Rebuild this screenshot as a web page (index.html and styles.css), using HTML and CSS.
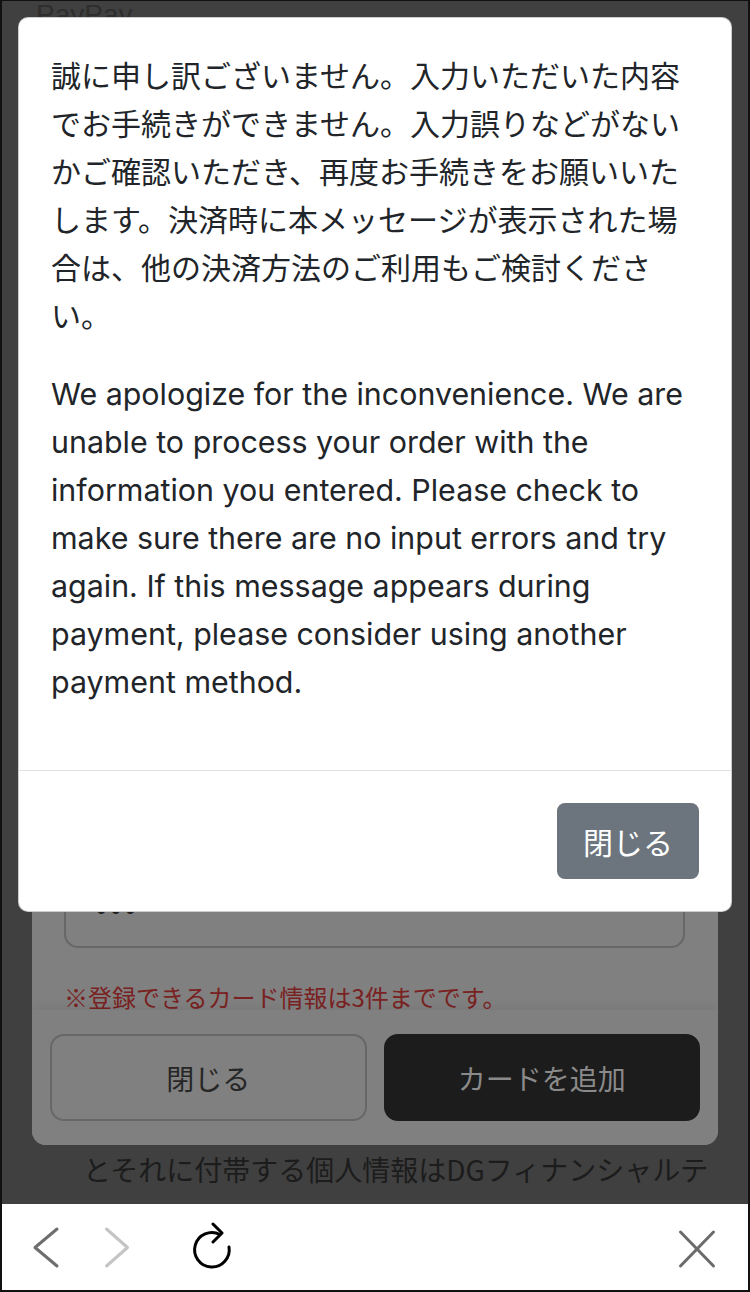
FILE: index.html
```html
<!DOCTYPE html>
<html lang="ja">
<head>
    <meta charset="UTF-8">
    <meta name="viewport" content="width=device-width, initial-scale=1.0">
    <title>PayPay</title>
    <link rel="stylesheet" href="styles.css">
</head>
<body>

    <div class="screen">
        <!-- Page behind the error dialog -->
        <div class="page">
            <div class="brand">PayPay</div>

            <div class="sheet">
                <div class="sheet-body">
                    <p class="field-label">カード番号</p>
                    <div class="field">•••• •••• •••• ••••</div>
                    <p class="field-label">有効期限</p>
                    <div class="field">MM / YY</div>
                    <p class="field-label">セキュリティコード</p>
                    <div class="field">•••</div>
                    <p class="note">※登録できるカード情報は3件までです。</p>
                </div>
                <div class="sheet-foot">
                    <button class="btn-outline">閉じる</button>
                    <button class="btn-dark">カードを追加</button>
                </div>
            </div>

            <p class="notice">とそれに付帯する個人情報はDGフィナンシャルテクノロジー社と契約関係にある加盟店に提供されます。</p>
        </div>

        <!-- Browser toolbar -->
        <div class="toolbar">
            <svg class="tool" width="44" height="44" viewBox="0 0 44 44">
                <polyline points="33,4 11,22.5 33,41" fill="none" stroke="#6e6e6e" stroke-width="3" stroke-linecap="round" stroke-linejoin="round"/>
            </svg>
            <svg class="tool tool-fwd" width="44" height="44" viewBox="0 0 44 44">
                <polyline points="11.5,4 32.5,22.5 11.5,41" fill="none" stroke="#c4c4c4" stroke-width="3" stroke-linecap="round" stroke-linejoin="round"/>
            </svg>
            <svg class="tool tool-reload" width="44" height="50" viewBox="0 0 44 50">
                <path d="M29 12.5 A17.3 17.3 0 1 0 38 25" fill="none" stroke="#000" stroke-width="3" stroke-linecap="round"/>
                <polyline points="22,2 31,11 22,20" fill="none" stroke="#000" stroke-width="3" stroke-linecap="round" stroke-linejoin="round"/>
            </svg>
            <svg class="tool tool-close" width="44" height="44" viewBox="0 0 44 44">
                <line x1="5.5" y1="7" x2="38.5" y2="41" stroke="#6b6b6b" stroke-width="3" stroke-linecap="round"/>
                <line x1="38.5" y1="7" x2="5.5" y2="41" stroke="#6b6b6b" stroke-width="3" stroke-linecap="round"/>
            </svg>
        </div>

        <!-- Error dialog -->
        <div class="modal">
            <div class="modal-body">
                <p class="msg-ja">誠に申し訳ございません。入力いただいた内容でお手続きができません。入力誤りなどがないかご確認いただき、再度お手続きをお願いいたします。決済時に本メッセージが表示された場合は、他の決済方法のご利用もご検討ください。</p>
                <p class="msg-en">We apologize for the inconvenience. We are unable to process your order with the information you entered. Please check to make sure there are no input errors and try again. If this message appears during payment, please consider using another payment method.</p>
            </div>
            <div class="modal-foot">
                <button class="btn-close">閉じる</button>
            </div>
        </div>
    </div>

</body>
</html>
```

FILE: styles.css
```css
body {
    margin: 0;
    padding: 0;
    background-color: #404040;
}
.screen {
    position: relative;
    width: 750px;
    height: 1292px;
    box-sizing: border-box;
    border: 2px solid #111;
    border-top-width: 1px;
    display: flex;
    flex-direction: column;
    overflow: hidden;
    background-color: #404040;
    font-family: "Noto Sans CJK JP", sans-serif;
}
button {
    font-family: "Noto Sans CJK JP", sans-serif;
    cursor: pointer;
}
p {
    margin: 0;
}

/* Page behind the overlay */
.page {
    flex: 1;
    overflow: hidden;
}
.brand {
    height: 30px;
    padding-left: 34px;
    font-family: "Liberation Sans", Arial, sans-serif;
    font-size: 28px;
    line-height: 28px;
    color: #2e2e2e;
}
.sheet {
    margin-left: 30px;
    width: 686px;
    height: 1114px;
    background-color: #808080;
    border-radius: 0 0 14px 14px;
    display: flex;
    flex-direction: column;
    justify-content: flex-end;
    overflow: hidden;
}
.sheet-body {
    padding: 0 33px 0 32px;
}
.field-label {
    margin-top: 40px;
    margin-bottom: 16px;
    font-size: 26px;
    line-height: 36px;
    color: #262626;
}
.field {
    border: 2px solid #676767;
    border-radius: 14px;
    padding: 32px 30px 12px;
    font-family: "Liberation Sans", Arial, sans-serif;
    font-size: 30px;
    line-height: 48px;
    letter-spacing: 4px;
    color: #1f1f1f;
}
.note {
    margin-top: 36px;
    font-size: 24px;
    line-height: 26px;
    color: #7a2121;
}
.sheet-foot {
    display: flex;
    gap: 17px;
    padding: 24px 18px;
    background-color: #808080;
    box-shadow: 0 -4px 8px rgba(0, 0, 0, 0.05);
}
.btn-outline, .btn-dark {
    flex: 1;
    height: 87px;
    box-sizing: border-box;
    border-radius: 14px;
    font-size: 28px;
}
.btn-outline {
    background-color: transparent;
    border: 2px solid #676767;
    color: #262626;
}
.btn-dark {
    background-color: #1c1c1c;
    border: 2px solid #1c1c1c;
    color: #8a8a8a;
}
.notice {
    margin: 0 30px 0 81px;
    font-size: 28px;
    line-height: 48px;
    color: #1c1c1c;
}

/* Browser toolbar */
.toolbar {
    height: 86px;
    flex-shrink: 0;
    background-color: #fff;
    display: flex;
    align-items: center;
    padding: 0 29px 0 22px;
}
.tool {
    display: block;
    flex-shrink: 0;
}
.tool-fwd {
    margin-left: 27px;
}
.tool-reload {
    margin-left: 52px;
}
.tool-close {
    margin-left: auto;
}

/* Error dialog */
.modal {
    position: absolute;
    top: 16px;
    left: 16px;
    right: 16px;
    background-color: #fff;
    border: 1px solid rgba(0, 0, 0, 0.2);
    border-radius: 10px;
}
.modal-body {
    padding: 32px;
}
.modal-body p {
    margin-bottom: 32px;
    line-height: 48px;
    color: #212529;
}
.msg-ja {
    font-size: 30px;
}
.msg-en {
    font-family: Inter, "Noto Sans", sans-serif;
    font-size: 30.4px;
}
.modal-foot {
    border-top: 1px solid #dee2e6;
    padding: 24px;
    display: flex;
    justify-content: flex-end;
}
.btn-close {
    margin: 8px;
    padding: 12px 24px;
    border: 2px solid #6c757d;
    border-radius: 8px;
    background-color: #6c757d;
    color: #fff;
    font-size: 30px;
    line-height: 48px;
}
```
